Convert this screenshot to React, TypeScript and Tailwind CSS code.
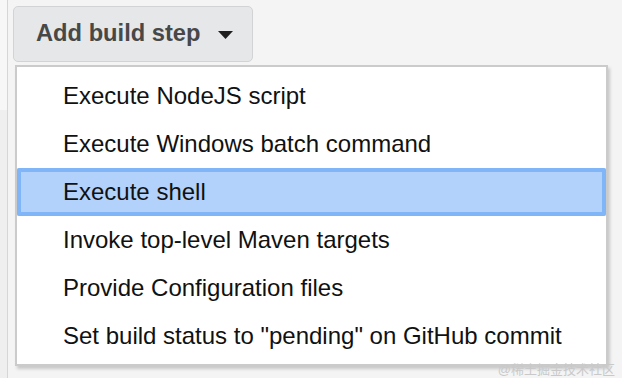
import { useState } from "react"

const steps = [
  "Execute NodeJS script",
  "Execute Windows batch command",
  "Execute shell",
  "Invoke top-level Maven targets",
  "Provide Configuration files",
  'Set build status to "pending" on GitHub commit',
]

export default function App() {
  const [active, setActive] = useState(2)

  return (
    <div
      className="relative w-[622px] h-[378px] overflow-hidden bg-[#f4f4f4] flex"
      style={{ fontFamily: '"Liberation Sans", Arial, Helvetica, sans-serif' }}
    >
      {/* page behind the menu */}
      <div className="w-[8px] shrink-0 flex flex-col">
        <div className="h-[110px] border-r border-[#d6d6d6] bg-[#f7f7f7]" />
        <div className="flex-1 border-r border-[#d6d6d6] bg-[#efefef]" />
      </div>
      <div className="flex-1 pl-[5px] pt-[6px]">
        <button className="flex items-center h-[56px] w-[240px] pl-[22px] rounded-[5px] border border-[#d2d3d4] bg-[#e6e7e8] text-[#484848] text-[23.7px] font-bold">
          <span>Add build step</span>
          <svg width="15" height="8" viewBox="0 0 15 8" className="ml-[18px] mt-[1px]">
            <path d="M0 0h15L7.5 8z" fill="#1f1f1f" />
          </svg>
        </button>
      </div>

      {/* dropdown menu */}
      <ul className="absolute left-[15px] top-[65px] w-[593px] h-[301px] pt-[5px] bg-white border-2 border-[#cbcbcb] shadow-[2px_3px_3px_rgba(0,0,0,0.18)]">
        {steps.map((label, i) => (
          <li
            key={label}
            onMouseEnter={() => setActive(i)}
            className={
              i === active
                ? "flex items-center h-[48px] pl-[46px] text-[24px] text-[#111] bg-[#b2d2fb] shadow-[inset_0_0_0_4px_#80b5f8] rounded-[2px]"
                : "flex items-center h-[48px] pl-[46px] text-[24px] text-[#111]"
            }
          >
            {label}
          </li>
        ))}
      </ul>

      <div
        className="absolute right-[7px] bottom-[0px] text-[13px] text-[#c9c9c9] leading-[17px]"
        style={{ fontFamily: '"Liberation Sans", "Noto Sans CJK SC", sans-serif' }}
      >
        @稀土掘金技术社区
      </div>
    </div>
  )
}
